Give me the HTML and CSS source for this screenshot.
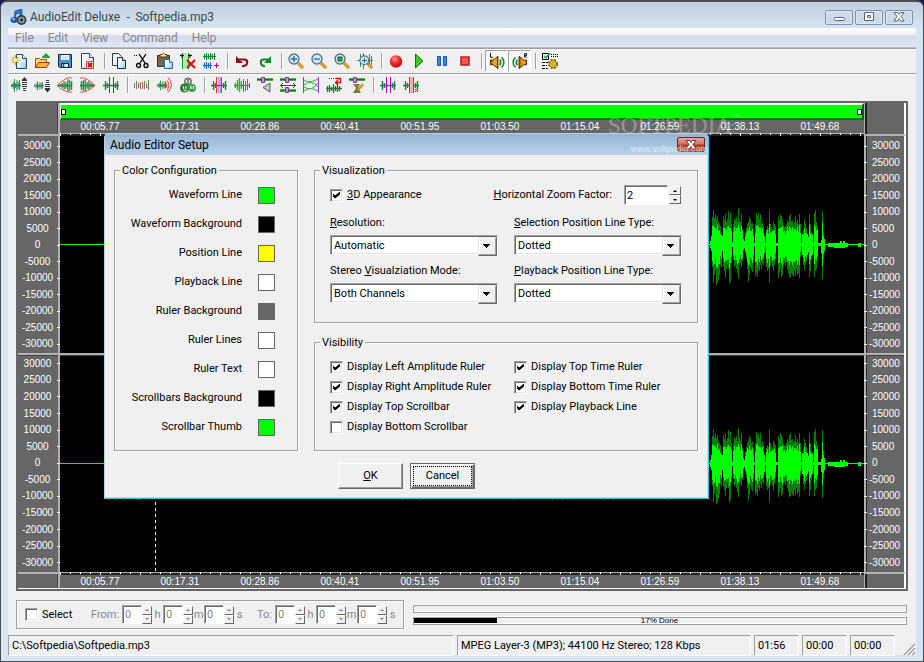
FILE: index.html
```html
<!DOCTYPE html>
<html lang="en">
<head>
<meta charset="utf-8">
<title>AudioEdit Deluxe - Softpedia.mp3</title>
<link rel="stylesheet" href="styles.css">
</head>
<body>
<svg class="sprite" aria-hidden="true">
  <defs>
    <linearGradient id="sheet" x1="0" y1="0" x2="1" y2="1"><stop offset=".3" stop-color="#fff"/><stop offset="1" stop-color="#8cc4ee"/></linearGradient>
    <radialGradient id="ball" cx=".4" cy=".3" r=".8"><stop offset="0" stop-color="#ff9a9a"/><stop offset=".4" stop-color="#ee3036"/><stop offset="1" stop-color="#b8000c"/></radialGradient>
    <linearGradient id="gold" x1="0" y1="0" x2="1" y2="0"><stop offset="0" stop-color="#a85c00"/><stop offset=".6" stop-color="#ffb020"/><stop offset="1" stop-color="#c87800"/></linearGradient>
    <symbol id="wave" viewBox="0 0 16 16" preserveAspectRatio="none"><path d="M0 8.500h16M1.500 7v3M3.500 5v7M5.500 2v13M7.500 6v5M9.500 3v11M11.500 5v7M13.500 3v10" stroke="#208044" stroke-width="1.400" fill="none"/></symbol>
    <symbol id="lens" viewBox="0 0 16 16"><path d="M10 10l5 5" stroke="#a86800" stroke-width="3"/><path d="M10 10l5 5" stroke="#ffb428" stroke-width="1.5"/><circle cx="6" cy="6" r="5" fill="#cdeaff" stroke="#5c7488" stroke-width="1.4"/></symbol>
    <symbol id="slider" viewBox="0 0 16 5"><path d="M0 1.500h16" stroke="#50b850"/><path d="M0 2.500h16" stroke="#087818"/><path d="M0 3.500h16" stroke="#48a848"/></symbol>
    <symbol id="knob" viewBox="0 0 4 6"><path d="M.5.5h3v5h-3z" fill="#d088e0" stroke="#8830a0"/></symbol>

    <symbol id="new" viewBox="0 0 16 16"><path d="M5.500 1.500h6l4 4v10h-10z" fill="url(#sheet)" stroke="#184878"/><path d="M11.500 1.500v4h4" fill="#fff" stroke="#184878"/><path d="M4.500 2v10M0 7h9M1.500 4l6 6M7.500 4l-6 6" stroke="#c8a800" stroke-width="1.200"/><circle cx="4.500" cy="7" r="2" fill="#fff88a"/></symbol>
    <symbol id="open" viewBox="0 0 16 16"><path d="M1.500 14.500v-9h4l1 1h6v3" fill="#ffd878" stroke="#a84800"/><path d="M1.500 14.500l3-5h11l-3 5z" fill="#ffb040" stroke="#983800"/><path d="M8 4.500l4-4 4 4z" fill="#20a830" stroke="#087018" stroke-width=".6"/></symbol>
    <symbol id="save" viewBox="0 0 16 16"><path d="M1.500 1.500h13v13h-12l-1-1z" fill="#4c90d0" stroke="#102840"/><path d="M4 2h8v5H4z" fill="#fff"/><path d="M5 4h6M5 6h6" stroke="#a8c8e0"/><path d="M4.500 10.500h7v4h-7z" fill="#d8e8f8" stroke="#102840"/><path d="M6.500 11v3" stroke="#205080" stroke-width="1.500"/></symbol>
    <symbol id="close" viewBox="0 0 16 16"><path d="M1.500.5h8l4 4v11h-12z" fill="url(#sheet)" stroke="#284868"/><path d="M9.500.5v4h4" fill="#fff" stroke="#284868"/><path d="M6.500 8.500h7v7h-7z" fill="#ffe0e0" stroke="#d82020" stroke-width=".8"/><path d="M8 10l4 4M12 10l-4 4" stroke="#d80000" stroke-width="1.800"/></symbol>
    <symbol id="copy" viewBox="0 0 16 16"><path d="M1.500.5h6l3 3v9h-9z" fill="#f0f4f8" stroke="#303840"/><path d="M6.500 4.500h5l3 3v8h-8z" fill="url(#sheet)" stroke="#183050"/><path d="M11.500 4.500v3h3" fill="#fff" stroke="#183050"/></symbol>
    <symbol id="cut" viewBox="0 0 16 16"><path d="M5 1l6 9M12 1l-6 9" stroke="#000" stroke-width="1.300"/><circle cx="4.500" cy="12.500" r="2" fill="none" stroke="#000" stroke-width="1.300"/><circle cx="12" cy="12.500" r="2" fill="none" stroke="#000" stroke-width="1.300"/><path d="M0 2.500h4" stroke="#000" stroke-dasharray="1 1"/></symbol>
    <symbol id="paste" viewBox="0 0 16 16"><path d="M.5 2.500h12v11H.5z" fill="#786848" stroke="#383020"/><path d="M3 4h7V1.500H8l-1-1H6l-1 1H3z" fill="#f0d890" stroke="#403010" stroke-width=".8"/><path d="M7.500 6.500h5l3 3v6h-8z" fill="url(#sheet)" stroke="#2868a8"/><path d="M12.500 6.500v3h3" fill="#fff" stroke="#2868a8"/></symbol>
    <symbol id="trim" viewBox="0 0 16 16"><path d="M3 0h6v16H3z" fill="#b0ecb0"/><path d="M2.500 0v16M8.500 0v16" stroke="#109828"/><path d="M0 2.500h4M8 2.500h4M2 1v4M10 1v4" stroke="#000"/><path d="M7 7l8 8M15 7l-8 8" stroke="#e80000" stroke-width="2"/></symbol>
    <symbol id="mix" viewBox="0 0 16 16"><path d="M0 3.500h13M1.500 1v5M3.500 0v7M5.500 1v5M7.500 0v7M9.500 1v5M11.500 0v7" stroke="#108838" stroke-width="1.200"/><path d="M0 12.500h9M1.500 10v5M3.500 9v7M5.500 10v5M7.500 9v7" stroke="#1868b8" stroke-width="1.200"/><path d="M13.500 10v5M11 12.500h5" stroke="#a000a8"/></symbol>
    <symbol id="undo" viewBox="0 0 16 16"><path d="M5 6.500h5q4 0 3 4-1 3-5 2.500" fill="none" stroke="#901018" stroke-width="2.200"/><path d="M2 3v7h7z" fill="#901018"/></symbol>
    <symbol id="redo" viewBox="0 0 16 16"><path d="M11 6.500H7q-4 0-3 4 1 3 4 2.500" fill="none" stroke="#108820" stroke-width="2.200"/><path d="M14 3v7H7z" fill="#108820"/></symbol>
    <symbol id="zoomin" viewBox="0 0 16 16"><use href="#lens"/><path d="M6 3v6M3 6h6" stroke="#2868a8" stroke-width="1.300"/></symbol>
    <symbol id="zoomout" viewBox="0 0 16 16"><use href="#lens"/><path d="M3 6h6" stroke="#2868a8" stroke-width="1.300"/></symbol>
    <symbol id="zoomsel" viewBox="0 0 16 16"><use href="#lens"/><path d="M4 4h4v4H4z" fill="#30a848" stroke="#106820"/></symbol>
    <symbol id="zoomall" viewBox="0 0 16 16"><path d="M0 7.500h16M3.500 1v13M6.500 0v16M12.500 1v12M14.500 3v9" stroke="#28a040"/><use href="#lens" x="2" y="2" width="14" height="14"/><path d="M7.500 5v5M5 7.500h5" stroke="#2868a8"/></symbol>
    <symbol id="record" viewBox="0 0 16 16"><circle cx="8" cy="8.500" r="6.200" fill="url(#ball)"/></symbol>
    <symbol id="play" viewBox="0 0 16 16"><path d="M4.500 1l7.500 7-7.500 7z" fill="#44c820" stroke="#147810"/></symbol>
    <symbol id="pause" viewBox="0 0 16 16"><path d="M3.500 3.500h3v9h-3zM9.500 3.500h3v9h-3z" fill="#3888f0" stroke="#1850c0"/></symbol>
    <symbol id="stop" viewBox="0 0 16 16"><path d="M4 4h8v8H4z" fill="#f05858" stroke="#c01820" stroke-width="1.500"/></symbol>
    <symbol id="left" viewBox="0 0 17 17"><path d="M1.500 7.500h3l5-4v13l-5-4h-3z" fill="url(#gold)" stroke="#402000"/><path d="M11.500 7q2 3 0 6" fill="none" stroke="#108828" stroke-width="1.600"/><path d="M13.500 4.500q4.500 5.500 0 11" fill="none" stroke="#108828" stroke-width="1.600"/><path d="M1.500 0v4.500h3" fill="none" stroke="#000"/></symbol>
    <symbol id="right" viewBox="0 0 17 17"><path d="M15.500 7.500h-3l-5-4v13l5-4h3z" fill="url(#gold)" stroke="#402000"/><path d="M5.500 7q-2 3 0 6" fill="none" stroke="#108828" stroke-width="1.600"/><path d="M3.500 4.500q-4.500 5.500 0 11" fill="none" stroke="#108828" stroke-width="1.600"/><path d="M13.500 5V.5h2v2h-2l2.500 2.500" fill="none" stroke="#000"/></symbol>
    <symbol id="options" viewBox="0 0 16 16"><path d="M.5.5h6v6h-6z" fill="#fff" stroke="#000"/><path d="M2 3l2 2 4-5" fill="none" stroke="#10a030" stroke-width="1.500"/><path d="M9 1.500h7M9 3.500h7" stroke="#000" stroke-dasharray="1 1"/><path d="M0 9.500h6M0 12.500h5M0 15.500h6" stroke="#000" stroke-dasharray="3 1"/><circle cx="11" cy="11" r="4" fill="none" stroke="#705000" stroke-width="2" stroke-dasharray="2 1.200"/><circle cx="11" cy="11" r="3.500" fill="#ffd000" stroke="#806000" stroke-width=".6"/><circle cx="11" cy="11" r="1.300" fill="#fff" stroke="#604000" stroke-width=".6"/></symbol>

    <symbol id="ampup" viewBox="0 0 16 16"><use href="#wave" width="10" height="16"/><path d="M11 3.500h5M11 5.500h5M11 7.500h5M11 9.500h5M12 11.500h3M12 13.500h3" stroke="#303840"/><path d="M10.500 3.500l3-3.500 3 3.500z" fill="#303840"/></symbol>
    <symbol id="ampdown" viewBox="0 0 16 16"><use href="#wave" y="3" width="10" height="11"/><path d="M12 3.500h3M12 5.500h3M11 7.500h5M11 9.500h5M11 11.500h5" stroke="#303840"/><path d="M10.500 12l3 3.500 3-3.500z" fill="#303840"/></symbol>
    <symbol id="fadein" viewBox="0 0 17 16"><path d="M0 8.500h16M3.500 7v3M5.500 6v5M7.500 4v9M9.500 5v7M11.500 2v13M13.500 3v11M15.500 4v9" stroke="#208840" stroke-width="1.400"/><path d="M16 .5h-5L3 5.500.5 8.500 3 11.500l8 4h5" fill="none" stroke="#f04040"/></symbol>
    <symbol id="fadeout" viewBox="0 0 17 16"><path d="M0 8.500h16M1.500 4v9M3.500 3v11M5.500 2v13M7.500 5v7M9.500 4v9M11.500 6v5M13.500 7v3" stroke="#208840" stroke-width="1.400"/><path d="M0 .5h5l8 5 2.500 3-2.500 3-8 4H0" fill="none" stroke="#f04040"/></symbol>
    <symbol id="silence" viewBox="0 0 16 16"><path d="M0 8.500h16M2.500 4v9M4.500 6v5M12.500 6v5M14.500 4v9" stroke="#188040" stroke-width="1.400"/><path d="M6.500 0v16M10.500 0v16" stroke="#a800b0"/></symbol>
    <symbol id="vibrato" viewBox="0 0 16 16"><path d="M.5 6v5M2.500 4v8M6.500 5v7M10.500 4v8M14.500 3v10" stroke="#508868"/><path d="M4.500 6v5M8.500 5v7M12.500 6v5" stroke="#e84848"/></symbol>
    <symbol id="echo" viewBox="0 0 16 16"><use href="#wave" y="2" width="10" height="12"/><path d="M9 6q2 2 0 5M10 3.500q4 5 0 10M11 .5q7 7.500 0 15" fill="none" stroke="#e84040"/></symbol>
    <symbol id="pitch" viewBox="0 0 16 16"><circle cx="8" cy="4.500" r="4" fill="#788078"/><circle cx="4.500" cy="11" r="4.500" fill="#207828"/><circle cx="12" cy="11" r="4" fill="#489850"/><path d="M6.500 3v3M9.500 3v3M3.500 9v3M6 9v3M11 9v3M13.500 9v3M3.500 13.500h3" stroke="#d8f8d8" stroke-width="1.300"/></symbol>
    <symbol id="reverse" viewBox="0 0 16 16"><path d="M0 8.500h16M2.500 4v9M4.500 6v5M12.500 6v5M14.500 4v9" stroke="#188040" stroke-width="1.400"/><path d="M7 0h3v16H7z" fill="#c8a0f0"/><path d="M5.500 0v16M10.500 0v16" stroke="#f03030"/><path d="M6 8.500h4" stroke="#a000b0"/></symbol>
    <symbol id="blend" viewBox="0 0 16 16"><path d="M0 8.500h10M1.500 6v5M3.500 3v10M5.500 1v14M7.500 4v8" stroke="#38a830" stroke-width="1.400"/><path d="M8 8.500h8M9.500 2v13M11.500 4v10M13.500 2v11M15.500 6v5" stroke="#8848b8"/></symbol>
    <symbol id="volume" viewBox="0 0 16 16"><use href="#slider" width="16" height="5"/><use href="#knob" x="4" width="4" height="6"/><path d="M6 10.500l7-4.500v9z" fill="#c8ccc8" stroke="#586058"/></symbol>
    <symbol id="stretch" viewBox="0 0 16 16"><use href="#slider" width="16" height="5"/><use href="#slider" y="11" width="16" height="5"/><use href="#knob" x="5" width="4" height="6"/><use href="#knob" x="5" y="10" width="4" height="6"/><path d="M0 8.500h16M3 6L.5 8.500 3 11M13 6l2.500 2.500L13 11" fill="none" stroke="#404840"/></symbol>
    <symbol id="envelope" viewBox="0 0 16 16"><path d="M.5 0v16M15.500 0v16" stroke="#9838c0"/><path d="M1 3q5 4 14-1M1 8q8-6 14 2M1 10q8 5 14-4M1 14q6-5 14 0" fill="none" stroke="#38a850"/></symbol>
    <symbol id="loop" viewBox="0 0 16 16"><path d="M0 11.500h16M1.500 9v6M3.500 8v7M5.500 10v4M7.500 7v9M9.500 9v5M11.500 8v7M13.500 9v5" stroke="#207840" stroke-width="1.300"/><path d="M3 1.500h7" stroke="#e00000" stroke-dasharray="1 1"/><path d="M10 1.500h4.500v4H10M12 3L9.500 5.500 12 8" fill="none" stroke="#e00000" stroke-width="1.300"/></symbol>
    <symbol id="tune" viewBox="0 0 16 16"><use href="#slider" width="16" height="5"/><use href="#knob" x="4" width="4" height="6"/><path d="M4 7h7l-2 4 3 5H4l3-5z" fill="#807848"/><path d="M9 13l5-6" stroke="#d89800" stroke-width="2.500"/></symbol>
    <symbol id="remove" viewBox="0 0 16 16"><path d="M0 8.500h16M2.500 4v9M4.500 6v5M12.500 6v5M14.500 4v9" stroke="#188040" stroke-width="1.400"/><path d="M6 0h5v16H6z" fill="#f8b0b0"/><path d="M6.500 0v16M10.500 0v16" stroke="#f02020"/><path d="M12 12l3 3M15 12l-3 3" stroke="#d00000"/></symbol>
  </defs>
</svg>

<div class="window">
  <header class="titlebar">
    <svg class="app-icon" viewBox="0 0 17 17"><path d="M5 2l7-2v8h-2V4L6 5v6H4z" fill="#2878d8" stroke="#103868" stroke-width=".6"/><ellipse cx="4" cy="11" rx="3.500" ry="3" fill="#2058b8"/><ellipse cx="3.500" cy="10" rx="1.500" ry="1" fill="#98d0ff"/><circle cx="11.500" cy="11" r="5" fill="#384048"/><circle cx="11.500" cy="11" r="3.200" fill="#8898a0"/><circle cx="11.500" cy="11" r="1.400" fill="#182028"/></svg>
    <h1>AudioEdit Deluxe &nbsp;-&nbsp; Softpedia.mp3</h1>
    <div class="window-buttons">
      <button type="button" aria-label="Minimize"><svg viewBox="0 0 14 12"><rect x="2.500" y="6.500" width="10" height="3" rx="1" fill="#fff" stroke="#5a6472"/></svg></button>
      <button type="button" aria-label="Maximize"><svg viewBox="0 0 14 12"><path d="M2.500 1.500h9v8h-9zM5.500 4.500v2h3v-2z" fill="#fff" fill-rule="evenodd" stroke="#5a6472"/></svg></button>
      <button type="button" aria-label="Close"><svg viewBox="0 0 14 12"><path d="M2 1.500h3.500L7 3.500l1.500-2H12L9 5.500l3 4.500H8.500L7 7.500 5.500 10H2l3-4.500z" fill="#fff" stroke="#5a6472"/></svg></button>
    </div>
  </header>

  <div class="client">
    <nav class="menu">
      <button type="button">File</button><button type="button">Edit</button><button type="button">View</button><button type="button">Command</button><button type="button">Help</button>
    </nav>
    <div class="toolbar" id="main-tools"></div>
    <div class="toolbar effects" id="effect-tools"></div>

    <main class="editor">
      <div class="corner top"></div>
      <div class="top-time">
        <div class="scrollbar"><i></i><i></i></div>
        <div class="times" data-times></div>
        <div class="ticks"></div>
      </div>
      <div class="corner top end"></div>
      <div class="levels" data-levels></div>
      <div class="plots">
        <svg class="channel" viewBox="0 0 804 217" preserveAspectRatio="none"></svg>
        <svg class="channel" viewBox="0 0 804 217" preserveAspectRatio="none"></svg>
        <div class="playback"></div>
      </div>
      <div class="levels end" data-levels></div>
      <div class="corner bottom"></div>
      <div class="bottom-time">
        <div class="ticks"></div>
        <div class="times" data-times></div>
      </div>
      <div class="corner bottom end"></div>
    </main>

    <section class="lower">
      <form class="selection">
        <label class="check"><input type="checkbox">Select</label>
        <div class="range" id="from"><span class="range-name">From:</span></div>
        <div class="range" id="to"><span class="range-name">To:</span></div>
      </form>
      <div class="progress-list">
        <div class="progress"></div>
        <div class="progress"><div class="bar" style="width:17%"></div><span>17% Done</span></div>
      </div>
    </section>

    <footer class="status">
      <div>C:\Softpedia\Softpedia.mp3</div>
      <div>MPEG Layer-3 (MP3); 44100 Hz Stereo; 128 Kbps</div>
      <div>01:56</div>
      <div>00:00</div>
      <div>00:00</div>
      <svg viewBox="0 0 14 14"><path d="M2 13L13 2M6 13l7-7M10 13l3-3" stroke="#a0a0a0" stroke-width="1.500"/><path d="M3.500 13.500l10-10M7.500 13.500l6-6" stroke="#fff"/></svg>
    </footer>
  </div>
</div>

<div class="watermark"><b>SOFTPEDIA</b><sup>™</sup></div>

<section class="dialog" role="dialog" aria-labelledby="dialog-title">
  <header>
    <h2 id="dialog-title">Audio Editor Setup</h2>
    <button type="button" aria-label="Close"><svg viewBox="0 0 14 12"><path d="M2 1.500h3.500L7 3.500l1.500-2H12L9 5.500l3 4.500H8.500L7 7.500 5.500 10H2l3-4.500z" fill="#fff" stroke="#703038"/></svg></button>
    <span class="site">www.softpedia.com</span>
  </header>
  <form class="dialog-body">
    <fieldset class="colors">
      <legend>Color Configuration</legend>
      <div><span>Waveform Line</span><button type="button" class="green" aria-label="Waveform Line"></button></div>
      <div><span>Waveform Background</span><button type="button" class="black" aria-label="Waveform Background"></button></div>
      <div><span>Position Line</span><button type="button" class="yellow" aria-label="Position Line"></button></div>
      <div><span>Playback Line</span><button type="button" class="white" aria-label="Playback Line"></button></div>
      <div><span>Ruler Background</span><button type="button" class="gray" aria-label="Ruler Background"></button></div>
      <div><span>Ruler Lines</span><button type="button" class="white" aria-label="Ruler Lines"></button></div>
      <div><span>Ruler Text</span><button type="button" class="white" aria-label="Ruler Text"></button></div>
      <div><span>Scrollbars Background</span><button type="button" class="black" aria-label="Scrollbars Background"></button></div>
      <div><span>Scrollbar Thumb</span><button type="button" class="green" aria-label="Scrollbar Thumb"></button></div>
    </fieldset>

    <fieldset class="visualization">
      <legend>Visualization</legend>
      <div class="first-row">
        <label class="check"><input type="checkbox" checked><span><u>3</u>D Appearance</span></label>
        <label class="zoom" for="zoom"><u>H</u>orizontal Zoom Factor:</label>
        <div class="spin"><input id="zoom" type="text" value="2"><span><button type="button" aria-label="Increase"></button><button type="button" aria-label="Decrease"></button></span></div>
      </div>
      <div class="combos">
        <div class="combo"><label for="res"><u>R</u>esolution:</label><div><select id="res"><option>Automatic</option></select></div></div>
        <div class="combo"><label for="sel"><u>S</u>election Position Line Type:</label><div><select id="sel"><option>Dotted</option></select></div></div>
        <div class="combo"><label for="stereo">Stereo <u>V</u>isualziation Mode:</label><div><select id="stereo"><option>Both Channels</option></select></div></div>
        <div class="combo"><label for="pos"><u>P</u>layback Position Line Type:</label><div><select id="pos"><option>Dotted</option></select></div></div>
      </div>
    </fieldset>

    <fieldset class="visibility">
      <legend>Visibility</legend>
      <label class="check"><input type="checkbox" checked>Display Left Amplitude Ruler</label>
      <label class="check"><input type="checkbox" checked>Display Top Time Ruler</label>
      <label class="check"><input type="checkbox" checked>Display Right Amplitude Ruler</label>
      <label class="check"><input type="checkbox" checked>Display Bottom Time Ruler</label>
      <label class="check"><input type="checkbox" checked>Display Top Scrollbar</label>
      <label class="check"><input type="checkbox" checked>Display Playback Line</label>
      <label class="check"><input type="checkbox">Display Bottom Scrollbar</label>
    </fieldset>

    <div class="actions">
      <button type="button"><span><u>O</u>K</span></button>
      <button type="button" class="default"><span>Cancel</span></button>
    </div>
  </form>
</section>
<script src="app.js"></script>
</body>
</html>
```
FILE: styles.css
```css
* { box-sizing: border-box; }

body {
  margin: 0;
  height: 100vh;
  background: #0a1850;
  color: #000;
  font: 11px/16px Roboto, "Open Sans", sans-serif;
  overflow: hidden;
}

button, input, select { font: inherit; color: inherit; margin: 0; padding: 0; }
h1, h2 { margin: 0; font-weight: 400; }
.sprite { position: absolute; width: 0; height: 0; }

.window {
  height: 100vh;
  display: flex;
  flex-direction: column;
  padding: 0 7px 6px;
  border: 1px solid #4a4a52;
  border-top-width: 2px;
  border-radius: 7px 7px 0 0;
  background: linear-gradient(#c0cfdd, #d7e4f2 26px);
}

.titlebar { height: 26px; display: flex; align-items: center; padding: 4px 0 0; }
.titlebar h1 { flex: 1; margin-left: 3px; font-size: 12px; line-height: 16px; color: #3c4650; }
.app-icon { width: 17px; height: 17px; margin-left: 2px; }
.window-buttons { display: flex; gap: 2px; padding-right: 3px; }
.window-buttons button {
  width: 28px; height: 15px;
  display: grid; place-items: center;
  border: 1px solid #8292ac; border-radius: 2px;
  background: #ccd9e7; box-shadow: inset 0 0 0 1px #dce7f2;
}
.window-buttons svg { width: 14px; height: 12px; }

.client { flex: 1; min-height: 0; display: flex; flex-direction: column; background: #f0f0f0; }

.menu {
  height: 20px; flex: none; display: flex;
  background: linear-gradient(#fff, #edf0f8 7px, #d4dbed 8px, #e2e7f5 19px);
  border-bottom: 1px solid #b6bccc;
}
.menu button { border: 0; background: none; padding: 0 7px; color: #868686; font-size: 12px; }

.toolbar { height: 25px; flex: none; display: flex; align-items: flex-start; padding-top: 1px; border-top: 1px solid #a0a0a0; box-shadow: inset 0 1px #fff; }
.toolbar.effects { height: 28px; padding-top: 0; }
.toolbar button { width: 23px; height: 22px; border: 0; background: none; padding: 3px 4px 3px 3px; }
.toolbar svg { display: block; width: 16px; height: 16px; }
.toolbar button.pressed {
  border: 1px solid; border-color: #a0a0a0 #fff #fff #a0a0a0; padding: 2px 3px 2px 3px;
  background: repeating-conic-gradient(#fff 0 25%, #f0f0f0 0 50%) 0 0 / 2px 2px;
}
.toolbar .gap { width: 8px; height: 22px; display: flex; justify-content: center; padding: 3px 0; }
.toolbar .gap::before { content: ""; width: 1px; background: #a0a0a0; box-shadow: 1px 0 #fff; }

.editor {
  flex: 1; min-height: 0; margin: 0 8px;
  display: grid;
  grid-template: 33px 1fr 17px / 42px 1fr 42px;
  border: 2px solid #666;
  background: #666; color: #fff;
  font: 10px/12px "Liberation Sans", sans-serif;
}
.corner { border-right: 2px solid #b0b0b0; box-shadow: inset -1px 0 #444; }
.corner.end { border: 0; border-left: 1px solid #b0b0b0; border-right: 2px solid #fff; box-shadow: inset 2px 0 #222; }
.corner.top { border-bottom: 2px solid #b0b0b0; }
.corner.bottom { border-top: 2px solid #b0b0b0; border-bottom: 1px solid #fff; }
.top-time, .bottom-time { display: flex; flex-direction: column; min-width: 0; }
.scrollbar {
  height: 17px; background: #0f0;
  border-top: 2px solid #e8ffe8; border-bottom: 2px solid #007800;
  border-left: 1px solid #fff; border-right: 2px solid #006000;
  display: flex; justify-content: space-between; align-items: center;
}
.scrollbar i { width: 5px; height: 6px; background: #fff; border: 1px solid #000; }
.times { flex: 1; display: flex; align-items: center; overflow: hidden; }
.times span { flex: none; width: 9.95%; text-align: center; }
.ticks {
  height: 3px;
  background:
    repeating-linear-gradient(90deg, #fff 0 1px, transparent 1px 40px) 0 0 / 100% 3px no-repeat,
    repeating-linear-gradient(90deg, #fff 0 1px, transparent 1px 10px) 0 0 / 100% 2px no-repeat,
    linear-gradient(#b0b0b0 0 1px, #222 1px 3px);
}
.bottom-time { border-bottom: 1px solid #fff; }

.levels { display: grid; grid-template-rows: 217fr 220fr; border-right: 2px solid #b0b0b0; min-height: 0; }
.levels ol { margin: 0; padding: 2px 0 0; list-style: none; display: flex; flex-direction: column; min-height: 0; }
.levels ol + ol { border-top: 2px solid #b0b0b0; box-shadow: inset 0 1px #444; padding: 1px 0; }
.levels li { flex: 1; min-height: 0; display: flex; align-items: center; }
.levels li span { flex: 1; text-align: center; }
.levels li::after { content: ""; width: 3px; height: 1px; background: #fff; margin-right: -2px; }
.levels.end { border-right: 2px solid #fff; border-left: 2px solid #b0b0b0; box-shadow: inset 1px 0 #222; }
.levels.end li { flex-direction: row-reverse; }
.levels.end li::after { margin: 0 0 0 -2px; }
.levels.end li span { text-align: left; padding-left: 5px; }
.levels.end li.minus span { padding-left: 2px; }
.plots {
  position: relative; display: grid; grid-template-rows: 1fr 1fr; gap: 2px; padding-bottom: 1px; min-height: 0;
  background: #b0b0b0;
}
.channel { width: 100%; height: 100%; min-height: 0; background: #000; display: block; }
.channel + .channel { border-top: 1px solid #444; box-shadow: 0 1px #000; }
.playback {
  position: absolute; top: 0; bottom: 0; left: 95px; width: 1px;
  background: repeating-linear-gradient(#fff 0 3px, transparent 3px 6px);
}

.lower { flex: none; display: flex; gap: 8px; padding: 9px 9px 6px 8px; }
.selection {
  width: 388px; height: 29px; flex: none; display: flex; align-items: center;
  padding-left: 8px; border: 1px solid #a0a0a0;
  box-shadow: 1px 1px #fff, inset 1px 1px #fff;
}
.selection .check { width: 66px; }
.range { display: flex; align-items: center; color: #868686; }
.range-name { width: 31px; }
#to .range-name { width: 18px; }
#to { margin-left: 12px; }
.range .unit { width: 11px; text-align: center; }

.check { display: flex; align-items: center; gap: 4px; }
.check input {
  appearance: none; width: 13px; height: 13px; flex: none; background: #fff;
  border: 1px solid; border-color: #a0a0a0 #fff #fff #a0a0a0;
  box-shadow: inset 1px 1px #696969, inset -1px -1px #e3e3e3;
  display: grid; place-items: center;
}
.check input:checked::before {
  content: ""; width: 7px; height: 7px; background: #000;
  clip-path: polygon(0 29%, 29% 57%, 100% 0, 100% 43%, 29% 100%, 0 71%);
}

.spin { display: flex; align-items: center; }
.spin input {
  width: 20px; height: 19px; padding-left: 2px; background: #fff; border-radius: 0;
  border: 1px solid; border-color: #a0a0a0 #fff #fff #a0a0a0;
  box-shadow: inset 1px 1px #696969;
}
.spin > span { display: flex; flex-direction: column; width: 10px; }
.spin button {
  height: 9px; background: #f0f0f0; display: grid; place-items: center;
  border: 1px solid; border-color: #fff #696969 #696969 #fff;
}
.spin button::before { content: ""; border: 2px solid transparent; border-top-width: 0; border-bottom-color: currentColor; }
.spin button + button::before { border-width: 2px 2px 0; border-top-color: currentColor; }

.progress-list { flex: 1; display: flex; flex-direction: column; gap: 3px; padding-top: 4px; }
.progress {
  height: 9px; position: relative; padding: 1px;
  border: 1px solid; border-color: #fff #a0a0a0 #a0a0a0 #fff;
  box-shadow: inset 1px 1px #a0a0a0, inset -1px -1px #fff;
}
.bar { height: 5px; background: #000; }
.progress span {
  position: absolute; inset: 0; text-align: center;
  font: 8px/8px "Liberation Sans", sans-serif;
}

.status { flex: none; display: grid; grid-template-columns: 1fr 294px 45px 45px 45px 18px; gap: 3px; height: 19px; margin-bottom: 1px; }
.status div {
  padding-left: 3px; line-height: 19px; white-space: nowrap;
  border: 1px solid; border-color: #a0a0a0 #fff #fff #a0a0a0;
}
.status svg { width: 14px; height: 14px; place-self: end; }

.watermark { position: absolute; left: 608px; top: 112px; color: #fff; opacity: .3; display: flex; font: 23px/28px "Liberation Serif", serif; }
.watermark b { font-weight: 400; }
.watermark sup { font-size: 8px; line-height: 10px; }

.dialog {
  position: absolute; left: 104px; top: 133px; width: 605px;
  border: 1px solid #b8d0e8; border-right-color: #38c8f0; border-bottom-color: #38b8d8;
  border-radius: 5px 5px 0 0;
  background: #f0f0f0; box-shadow: inset -1px -1px #c8d8e8;
}
.dialog header {
  height: 21px; position: relative; display: flex; justify-content: space-between; padding: 0 3px 0 5px;
  border-radius: 4px 4px 0 0;
  background: linear-gradient(#98b4d2, #b9d1ea);
}
.dialog h2 { font-size: 12px; line-height: 22px; }
.dialog header button {
  width: 28px; height: 15px; margin-top: 3px; display: grid; place-items: center;
  border: 1px solid #642430; border-radius: 2px;
  background: linear-gradient(#e8a898, #d07060 48%, #b83020 52%, #d07050);
}
.dialog header svg { width: 14px; height: 12px; }
.site { position: absolute; right: 0; top: 8px; color: #fff; opacity: .6; font: 9px/14px "Liberation Sans", sans-serif; }

.dialog-body {
  display: grid; grid-template: 153px 128px auto / 184px 1fr;
  column-gap: 16px; padding: 15px 10px 9px 9px;
}
fieldset {
  min-width: 0; margin: 0; padding: 0; position: relative;
  border: 1px solid #a0a0a0; box-shadow: 1px 1px #fff, inset 1px 1px #fff;
}
legend { position: absolute; left: 5px; top: -8px; padding: 0 2px; background: #f0f0f0; }

.colors { grid-row: span 2; padding: 16px 22px 0 0; }
.colors div { display: flex; justify-content: flex-end; gap: 16px; height: 29px; }
.colors button { width: 17px; height: 17px; border: 1px solid #666; }
.green { background: #0f0; }
.black { background: #000; }
.yellow { background: #ff0; }
.white { background: #fff; }
.gray { background: #666; }

.visualization { padding: 14px 15px 0; }
.first-row { display: flex; align-items: center; height: 20px; }
.zoom { margin-left: auto; }
.visualization .spin { margin: 0 1px 0 12px; }
.visualization .spin input { width: 44px; height: 20px; }
.visualization .spin > span { width: 12px; margin-left: 1px; }
.combos { display: grid; grid-template-columns: 168px 168px; justify-content: space-between; row-gap: 8px; margin-top: 10px; }
.combo { height: 40px; }
.combo label { display: block; }
.combo > div { position: relative; margin-top: 4px; height: 20px; }
select {
  appearance: none; display: block; width: 100%; height: 20px; padding: 1px 0 0 3px; background: #fff; border-radius: 0;
  border: 1px solid; border-color: #a0a0a0 #fff #fff #a0a0a0;
  box-shadow: inset 1px 1px #696969, inset -1px -1px #e3e3e3;
}
.combo > div::after {
  content: ""; position: absolute; right: 1px; top: 2px; width: 17px; height: 17px; pointer-events: none;
  border: 1px solid; border-color: #e3e3e3 #696969 #696969 #e3e3e3;
  box-shadow: inset -1px -1px #a0a0a0, inset 1px 1px #fff;
  background:
    linear-gradient(#000, #000) 4px 6px / 7px 1px no-repeat,
    linear-gradient(#000, #000) 5px 7px / 5px 1px no-repeat,
    linear-gradient(#000, #000) 6px 8px / 3px 1px no-repeat,
    linear-gradient(#000, #000) 7px 9px / 1px 1px no-repeat,
    #f0f0f0;
}

.visibility { margin-top: 19px; padding: 14px 15px 0; display: grid; grid-template-columns: 184px 1fr; grid-auto-rows: 20px; }
.actions { grid-column: 1 / -1; display: flex; gap: 7px; padding-left: 224px; margin-top: 12px; }
.actions button {
  width: 65px; height: 26px; background: #f0f0f0; padding: 2px;
  border: 1px solid; border-color: #fff #696969 #696969 #fff; box-shadow: inset -1px -1px #a0a0a0;
}
.actions .default { border-color: #696969; box-shadow: inset 1px 1px #fff, inset -1px -1px #696969, inset -2px -2px #a0a0a0; }
.actions span { display: block; line-height: 18px; }
.actions .default span { border: 1px dotted #000; }
```
FILE: app.js
```js
const SVG = "http://www.w3.org/2000/svg";

// Toolbars: null is a separator, a leading "!" marks a pressed button.
const toolbars = {
  "main-tools": ["new", "open", "save", "close", null, "copy", "cut", "paste", "trim", "mix", null, "undo", "redo", null,
    "zoomin", "zoomout", "zoomsel", "zoomall", null, "record", "play", "pause", "stop", null, "!left", "!right", null, "options"],
  "effect-tools": ["ampup", "ampdown", "fadein", "fadeout", "silence", null, "vibrato", "echo", "pitch", null,
    "reverse", "blend", "volume", "stretch", "envelope", "loop", "tune", null, "silence", "remove"]
};
for (const [id, tools] of Object.entries(toolbars)) {
  document.getElementById(id).innerHTML = tools.map(t => {
    if (!t) return '<span class="gap"></span>';
    const name = t.replace("!", "");
    return `<button type="button" aria-label="${name}"${t[0] === "!" ? ' class="pressed"' : ""}><svg><use href="#${name}"/></svg></button>`;
  }).join("");
}

// Rulers
const times = ["00:05.77", "00:17.31", "00:28.86", "00:40.41", "00:51.95", "01:03.50", "01:15.04", "01:26.59", "01:38.13", "01:49.68"];
document.querySelectorAll("[data-times]").forEach(el => {
  el.innerHTML = times.map(t => `<span>${t}</span>`).join("");
});
let list = "<ol>";
for (let v = 30000; v >= -30000; v -= 5000) list += `<li${v < 0 ? ' class="minus"' : ""}><span>${v}</span></li>`;
list += "</ol>";
document.querySelectorAll("[data-levels]").forEach(el => { el.innerHTML = list + list; });

// Waveform: peaks per pixel column, starting at column 650
const up = [3,8,27,34,26,30,25,28,22,20,18,12,8, 28,24,30,22,25,33,24,31,20,2, 20,26,24,27,22,36,25,22,30,15,5,
  3,12,16,20,22,27,25,20,21,12,1, 20,31,28,30,25,30,20,22,18,8,1, 15,18,16,34,20,17,15,22,20,18,1,1, 27,24,30,28,25,19,17,18,20,24,22,28,30,
  23,24,20,22,28,21,24,20,30,20,1, 10,14,24,20,16,10,8,30,20,12,10,1, 31,34,22,18,1,1,1,4,33,12,5];
const down = [3,6,22,38,30,25,40,38,35,30,20,22,6, 22,26,32,24,20,24,38,36,18,2, 15,22,20,24,28,33,20,18,22,16,5,
  3,8,14,24,37,30,22,25,27,15,1, 31,28,32,24,26,20,24,18,20,8,1, 22,26,24,38,20,18,22,26,20,14,1,1, 33,28,24,32,30,19,18,21,17,24,28,33,32,
  28,30,32,26,31,24,30,28,33,12,1, 10,20,26,20,17,10,8,32,26,15,10,1, 32,26,24,12,1,1,1,8,34,14,6];
function bars(top, bottom) {
  return top.map((t, i) => `M${650 + i} ${108 - t}h1V${109 + bottom[i]}h-1z`).join("");
}
function shape(parent, d, fill) {
  const path = document.createElementNS(SVG, "path");
  path.setAttribute("d", d);
  path.setAttribute("fill", fill);
  path.setAttribute("shape-rendering", "crispEdges");
  parent.append(path);
}
const core = (v, i) => Math.min(v, Math.round(v * .45) + 2 + (i * 7) % 5);
const low = [48, 56, 64, 77, 79, 342, 360, 453, 492, 502, 543, 553, 608].map(x => `M${x} 142h1v3h-1z`).join("");
document.querySelectorAll(".channel").forEach(svg => {
  shape(svg, bars(up, down) + low, "#008000");
  shape(svg, bars(up.map(core), down.map(core)) + "M0 108h804v1H0zM768 107h20v4h-4v1h-10v-1h-6zM780 105h2v7h-2zM783 105h2v7h-2zM798 107h3v4h-3z", "#00ff00");
});

// Time fields
const field = (name, unit) => `<div class="spin"><input type="text" value="0" disabled aria-label="${name} ${unit}"><span><button type="button" aria-label="Increase"></button><button type="button" aria-label="Decrease"></button></span></div><span class="unit">${unit}</span>`;
for (const id of ["from", "to"]) {
  document.getElementById(id).insertAdjacentHTML("beforeend", ["h", "m", "s"].map(u => field(id, u)).join(""));
}
```
